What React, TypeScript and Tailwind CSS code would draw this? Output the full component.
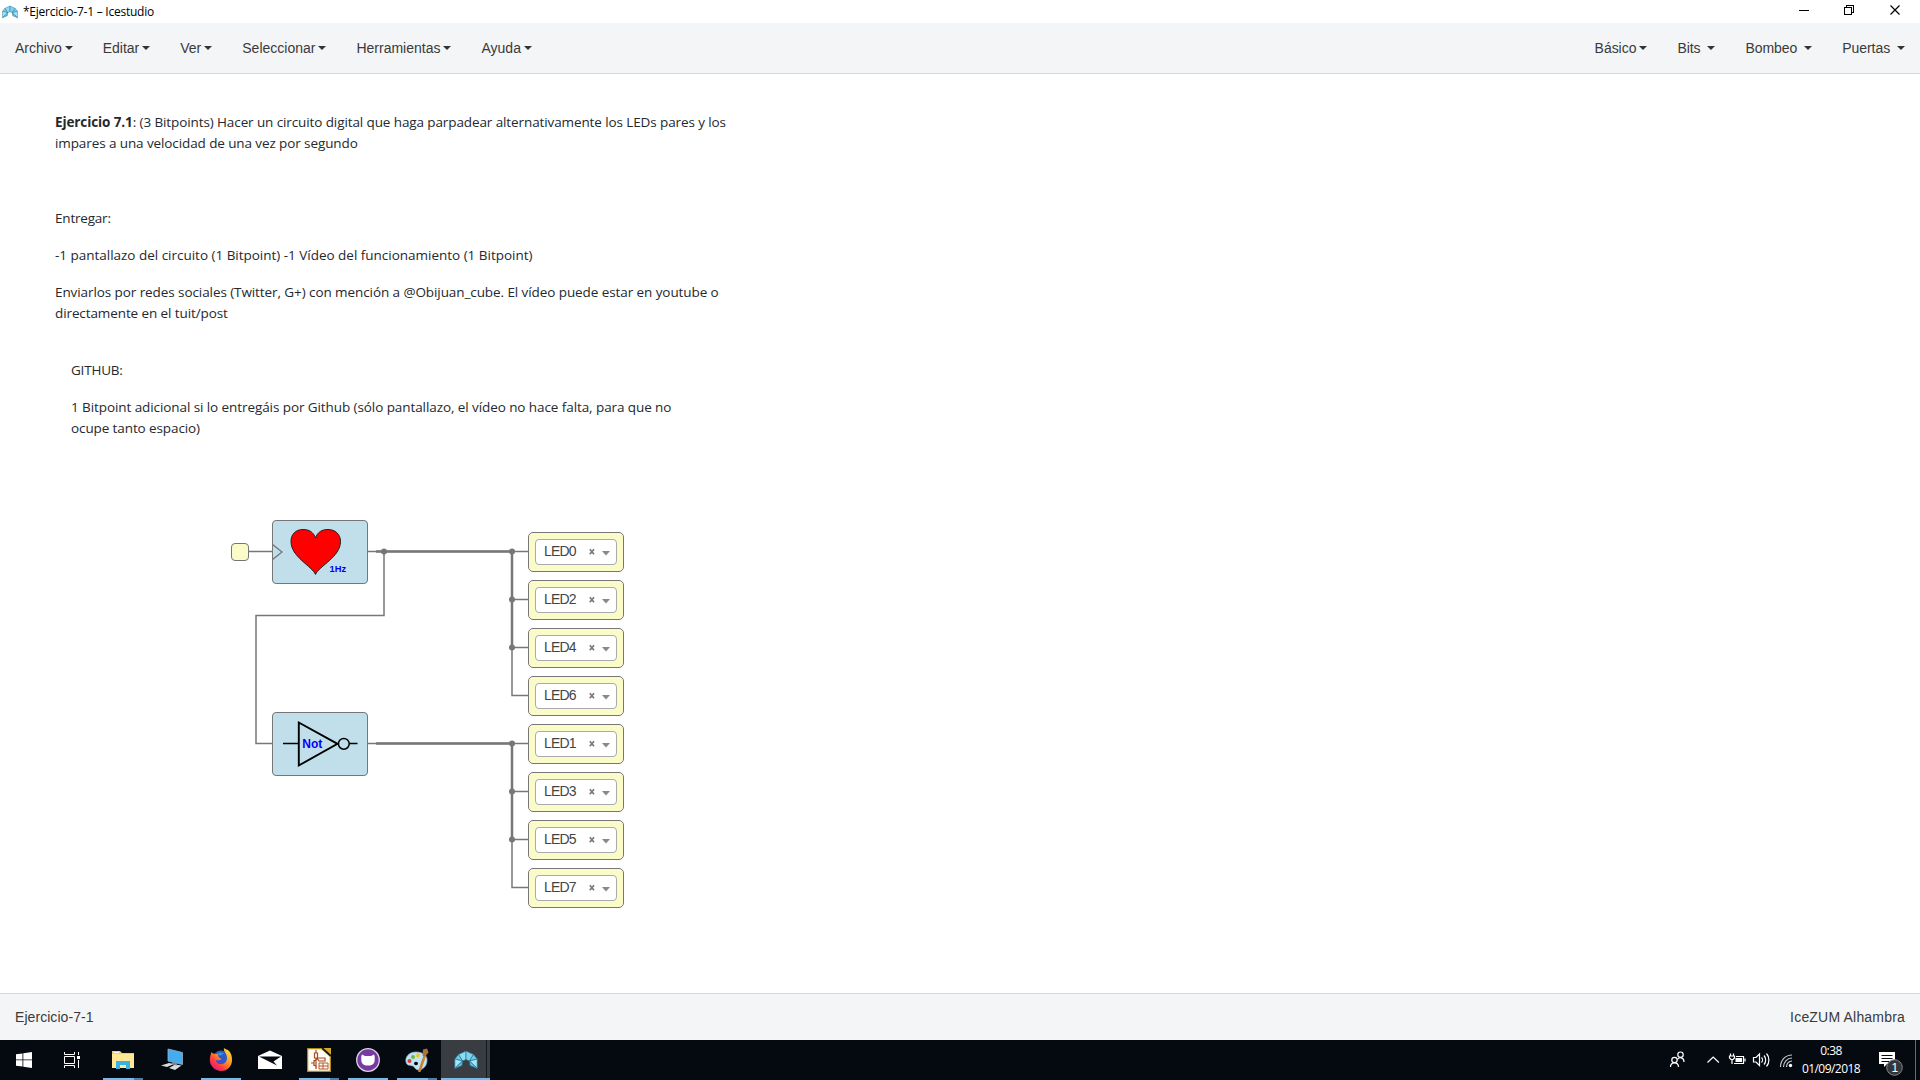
import React from "react";

const SANS = "font-['Liberation_Sans',Arial,sans-serif]";
const leftMenu = ["Archivo", "Editar", "Ver", "Seleccionar", "Herramientas", "Ayuda"];
const rightMenu = ["Básico", "Bits ", "Bombeo ", "Puertas "];

const Caret = () => (
  <span className="ml-[3px] inline-block border-x-4 border-t-4 border-x-transparent border-t-[#333] align-middle" />
);

function MenuItem({ label }: { label: string }) {
  return (
    <div className="flex h-[50px] items-center pr-[15px] pl-[15px] text-sm whitespace-pre text-[#3a3a3a]">
      <span>{label}</span>
      <Caret />
    </div>
  );
}

function IceLogo({ size }: { size: number }) {
  return (
    <svg width={size} height={size} viewBox="0 0 24 24" stroke="#2b7590" strokeWidth="0.7" strokeLinejoin="round">
      <path d="M12 3 4.500 6.500 8.500 13 12 11.500Z" fill="#8edcf4" />
      <path d="M12 3 19.500 6.500 15.500 13 12 11.500Z" fill="#7fd3ee" />
      <path d="M4.500 6.500 .8 11 8.500 13Z" fill="#6ecdec" />
      <path d="M19.500 6.500 23.200 11 15.500 13Z" fill="#6ecdec" />
      <path d="M.8 11 8.500 13 .8 20.500Z" fill="#a4e6f8" />
      <path d="M23.200 11 15.500 13 23.200 20.500Z" fill="#a4e6f8" />
      <path d="M.8 20.500 8.500 13 8 17.500Z" fill="#5fc3e6" />
      <path d="M23.200 20.500 15.500 13 16 17.500Z" fill="#5fc3e6" />
    </svg>
  );
}

function TitleBar() {
  return (
    <header className="flex h-[23px] shrink-0 items-center bg-white pl-[2px]">
      <IceLogo size={16} />
      <span className="ml-[5px] font-['Open_Sans','Noto_Sans',sans-serif] text-[12px] leading-4 tracking-[-0.24px] text-black">
        *Ejercicio-7-1 – Icestudio
      </span>
      <svg className="ml-auto" width="130" height="23" fill="none" stroke="#000" shapeRendering="crispEdges">
        <path d="M9 10.500H19" />
        <path d="M54.500 7.500h7v7h-7zM56.500 7V5.500h7v7H62" />
        <path d="M100.500 5.500l9 9M109.500 5.500l-9 9" shapeRendering="auto" strokeWidth="1.200" />
      </svg>
    </header>
  );
}

function Notes() {
  return (
    <div className="font-['Open_Sans','Noto_Sans',sans-serif] text-[13.500px] leading-[21px] whitespace-nowrap text-[#24292e]">
      <div className="absolute top-[38px] left-[55px]">
        <p className="tracking-[-0.105px]">
          <b>Ejercicio 7.1</b>: (3 Bitpoints) Hacer un circuito digital que haga parpadear alternativamente los LEDs pares y los
        </p>
        <p className="tracking-[-0.1px]">impares a una velocidad de una vez por segundo</p>
        <p className="mt-[54px] tracking-[-0.2px]">Entregar:</p>
        <p className="mt-4 tracking-[-0.017px]">-1 pantallazo del circuito (1 Bitpoint) -1 Vídeo del funcionamiento (1 Bitpoint)</p>
        <p className="mt-4 tracking-[-0.083px]">
          Enviarlos por redes sociales (Twitter, G+) con mención a @Obijuan_cube. El vídeo puede estar en youtube o
        </p>
        <p className="tracking-[-0.1px]">directamente en el tuit/post</p>
      </div>
      <div className="absolute top-[286px] left-[71px]">
        <p className="tracking-[-0.2px]">GITHUB:</p>
        <p className="mt-4 tracking-[-0.082px]">
          1 Bitpoint adicional si lo entregáis por Github (sólo pantallazo, el vídeo no hace falta, para que no
        </p>
        <p className="tracking-[-0.1px]">ocupe tanto espacio)</p>
      </div>
    </div>
  );
}

function Wires() {
  return (
    <svg className="absolute inset-0" width="700" height="919" viewBox="0 74 700 919" fill="none" stroke="#777">
      <g strokeWidth="1.500">
        <path d="M248 551.500H272M368 551.500H528" />
        <path d="M384 551.500V615.500H256V743.500H272M368 743.500H528" />
        <path d="M512 551.500V695.500H528M512 599.500H528M512 647.500H528" />
        <path d="M512 743.500V887.500H528M512 791.500H528M512 839.500H528" />
      </g>
      <g strokeWidth="2.500">
        <path d="M376 551.500H512V647.500M376 743.500H512V839.500" />
      </g>
      <g fill="#777" stroke="none">
        <circle cx="384" cy="551.500" r="3" />
        {[551.5, 599.5, 647.5, 743.5, 791.5, 839.5].map((y) => (
          <circle key={y} cx="512" cy={y} r="3" />
        ))}
      </g>
    </svg>
  );
}

function Led({ name, top }: { name: string; top: number }) {
  return (
    <div
      className="absolute left-[528px] flex h-10 w-24 items-center justify-center rounded-[5px] border border-[#777] bg-[#fbfbc9]"
      style={{ top }}
    >
      <div className="flex h-[26px] w-[82px] items-center rounded-[4px] border border-[#aaa] bg-white pl-2 text-[14px] text-[#444]">
        <span className="w-[44px] pb-[2px] tracking-[-0.8px]">{name}</span>
        <svg width="24" height="10" viewBox="0 0 24 10">
          <path d="M1.800 2.200l4.200 5M6 2.200l-4.200 5" stroke="#777" strokeWidth="1.700" />
          <path d="M14 4h8l-4 4.500z" fill="#888" />
        </svg>
      </div>
    </div>
  );
}

function Canvas() {
  return (
    <main className="relative flex-1 overflow-hidden bg-white">
      <Notes />
      <Wires />
      <div className="absolute top-[469px] left-[231px] size-[18px] rounded-[4px] border border-[#777] bg-[#fbfbc9]" />
      <div className="absolute top-[446px] left-[272px] h-16 w-24 rounded-[4px] border border-[#777] bg-[#c0dfeb]">
        <svg width="94" height="62" viewBox="273 521 94 62">
          <path d="M272.500 544.500L282 552L272.500 559.500" fill="none" stroke="#777" strokeWidth="1.300" />
          <path
            d="M315.500 574.500C312 566 291 557 291 541.500C291 534 296 529.500 303 529.500C309 529.500 313.500 532 315.500 538C317.500 532 322 529.500 328 529.500C335 529.500 340.500 534 340.500 541.500C340.500 557 319 566 315.500 574.500Z"
            fill="#f00"
            stroke="#222"
          />
          <text x="329.500" y="572" fill="#00f" fontSize="9.300" fontWeight="bold">1Hz</text>
        </svg>
      </div>
      <div className="absolute top-[638px] left-[272px] h-16 w-24 rounded-[4px] border border-[#777] bg-[#c0dfeb]">
        <svg width="94" height="62" viewBox="273 713 94 62" fill="none" stroke="#000">
          <path d="M283 743.500H298M349 743.500H357.500" strokeWidth="1.300" />
          <path d="M298.800 722.500V765.500L337.500 743.800Z" strokeWidth="1.900" />
          <circle cx="343.800" cy="743.800" r="5.400" strokeWidth="1.500" />
          <text x="302.300" y="748" fill="#00f" stroke="none" fontSize="12" fontWeight="bold">Not</text>
        </svg>
      </div>
      {["LED0", "LED2", "LED4", "LED6", "LED1", "LED3", "LED5", "LED7"].map((n, i) => (
        <Led key={n} name={n} top={458 + i * 48} />
      ))}
    </main>
  );
}

function TaskButton({ children, bar = "", extra = false, active = false }: {
  children: React.ReactNode;
  bar?: string;
  extra?: boolean;
  active?: boolean;
}) {
  return (
    <div className={`relative flex h-10 w-[49px] items-center justify-center ${active ? "bg-[#393d42]" : ""}`}>
      {children}
      {bar && (
        <div className={`absolute bottom-0 flex h-[2px] bg-[#76b9ed] ${bar}`}>
          {extra && <span className="ml-auto w-[9px] bg-[#4f7fa6]" />}
        </div>
      )}
    </div>
  );
}

function TaskBar() {
  return (
    <footer className="flex h-10 shrink-0 bg-[#050a10] text-white">
      <div className="flex w-12 items-center justify-center">
        <svg width="16" height="16" viewBox="0 0 16 16" fill="#fff">
          <path d="M0 2.300 6.500 1.400V7.500H0zM7.300 1.300 16 0V7.500H7.300zM0 8.300H6.500V14.600L0 13.700zM7.300 8.300H16V16L7.300 14.700z" />
        </svg>
      </div>
      <div className="flex w-[50px] items-center justify-center pr-[2px]">
        <svg width="16" height="16" viewBox="0 0 16 16" fill="none" stroke="#fff">
          <path d="M.5 4.500h10v7H.5zM.5 0v2.500h10V0M.5 16v-2.500h10V16M14.500 0v3M14.500 8v8" />
          <path d="M13 4h3v3h-3z" fill="#fff" stroke="none" />
        </svg>
      </div>
      <TaskButton bar="w-10" extra>
        <svg width="22" height="20" viewBox="0 0 22 20">
          <path d="M0 1h8l2 2h12v15H0z" fill="#f6ce62" />
          <path d="M0 4h22v14H0z" fill="#ffe794" />
          <path d="M2 2h5v1H2z" fill="#fff" />
          <path d="M4 19v-8h14v8h-4v-4H8v4z" fill="#38b1e7" />
        </svg>
      </TaskButton>
      <TaskButton>
        <svg width="24" height="24" viewBox="0 0 24 24">
          <path d="M8 1 22.500 4.500V16.500L8 13z" fill="#43adf2" stroke="#9bb0bd" strokeWidth=".8" />
          <path d="M1 17.500 9 15l5 1-7 3zM9 20l6-3.500 6.500 1L15 22z" fill="#d8dcdf" />
          <path d="M12 14l5 1.500v2l-5-1z" fill="#7b8992" />
        </svg>
      </TaskButton>
      <TaskButton bar="w-10">
        <svg width="24" height="24" viewBox="0 0 24 24">
          <defs>
            <linearGradient id="fox" x1="1" y1="0" x2="0.200" y2="1">
              <stop offset="0" stopColor="#fff04a" />
              <stop offset=".45" stopColor="#ff9a1c" />
              <stop offset=".75" stopColor="#ff3a45" />
              <stop offset="1" stopColor="#e31587" />
            </linearGradient>
          </defs>
          <circle cx="12" cy="11" r="8.500" fill="#3156c9" />
          <path d="M2.500 4C1 8 .5 11 1 14c1 5 6 9 11 9 7 0 11-5 11-11 0-4-1-7-3-9C18 1 15 1 15 0c-1 3 3 5 3 10 0 4-3 6-6 6-4 0-5-2-5-4 2 1 4 0 6-1-3-1-4-2-4-5-3 0-5 0-6.500-2z" fill="url(#fox)" />
          <path d="M8 6c2-2 5-2 7 0-2 0-3 1-3 2" fill="#229ed9" />
        </svg>
      </TaskButton>
      <TaskButton>
        <svg width="24" height="20" viewBox="0 0 24 20">
          <path d="M0 6 12 .5 24 6V19H0z" fill="#fff" />
          <path d="M1 6.500H23L15.500 11.500 19 15.500z" fill="#050a10" />
        </svg>
      </TaskButton>
      <TaskButton bar="w-10" extra>
        <svg width="24" height="24" viewBox="0 0 24 24" fill="none">
          <path d="M.5.500h16l7 7v16H.5z" fill="#fffdf5" stroke="#b18714" strokeWidth="1.500" />
          <path d="M13 0h11v10z" fill="#d4aa27" />
          <path d="M15 0 24 8" stroke="#171a1c" strokeWidth="1.800" />
          <path d="M9 2v3M7.500 5h3v5h-3zM9 10v11M4 15h3M7 12v6M7 13l3-2M7 17l3 2M10 10h8v3h-6z" stroke="#a94b25" strokeWidth="1.200" />
          <path d="M12 15h9v6h-9zM12 18h9M16 15v6" stroke="#b35b34" />
        </svg>
      </TaskButton>
      <TaskButton bar="w-10">
        <svg width="24" height="24" viewBox="0 0 24 24">
          <circle cx="12" cy="12" r="11.300" fill="#773aa0" stroke="#ded5e5" strokeWidth="1.300" />
          <path d="M6 6.500l3 1.500h6l3-1.500c1 2 .7 3 .7 5 0 4-2 6-6.700 6s-6.700-2-6.700-6c0-2-.3-3 .7-5z" fill="#fff" />
        </svg>
      </TaskButton>
      <TaskButton bar="w-10" extra>
        <svg width="24" height="24" viewBox="0 0 24 24">
          <path d="M11 4C4 4 0 9 1 14c1 4 4 3 7 4 2 1 2 4 6 4 6-1 8-6 8-10 0-5-5-8-11-8z" fill="#bfe3f2" stroke="#8fbdd1" strokeWidth=".7" />
          <ellipse cx="11" cy="15.500" rx="2" ry="1.700" fill="#050a10" />
          <circle cx="4.500" cy="13" r="2" fill="#db3a3a" />
          <circle cx="8" cy="9" r="2" fill="#74b63e" />
          <circle cx="13" cy="7.500" r="2" fill="#efc22f" />
          <path d="M20 7 14.500 23" stroke="#c9822f" strokeWidth="2.500" strokeLinecap="round" />
          <path d="M18 1.500l4-1 1.500 4-3.500 4-2.500-1z" fill="#a8713e" />
        </svg>
      </TaskButton>
      <TaskButton bar="inset-x-0" active>
        <IceLogo size={24} />
        <span className="absolute top-0 right-[3px] h-[38px] w-px bg-[#16191d]" />
      </TaskButton>

      <div className="ml-auto flex items-center">
        <svg width="130" height="40" viewBox="1665 1040 130 40" fill="none" stroke="#fff" strokeWidth="1.200">
          <circle cx="1674.500" cy="1060" r="2.700" />
          <path d="M1670.500 1067c0-3 1.500-4.200 4-4.200s4 1.200 4 4.200" />
          <circle cx="1680.500" cy="1054.700" r="2.700" />
          <path d="M1677.500 1059.500c2-3 6.500-2 6.500 2.500" />
          <path d="M1707.500 1062.500l5.700-5.500 5.700 5.500" />
          <path d="M1736 1056.500h7.500v7h-9.500M1745 1058.500v3" />
          <path d="M1735.500 1058h6.500v4h-6.500z" fill="#fff" stroke="none" />
          <path d="M1729.500 1056h5v2l-1.500 1.500h-2l-1.500-1.500zM1730.500 1053.500v2M1733.500 1053.500v2M1732 1060v4" />
          <path d="M1753.500 1057.500h2.500l3.500-3.500v11.500l-3.500-3.500h-2.500z" />
          <path d="M1761.500 1057.500c1.300 1.300 1.300 3.700 0 5M1764 1055.500c2.200 2.500 2.200 6.500 0 9M1766.500 1053.500c3.200 3.500 3.200 9.500 0 13" />
          <path d="M1780.500 1067c0-7 5-12 11.500-12M1783.500 1067c0-5 4-9 8.500-9M1786.500 1067c0-3.500 2.500-6 5.500-6" stroke="#c8cacc" />
          <circle cx="1790.500" cy="1065.500" r="1.700" fill="#fff" stroke="none" />
        </svg>
        <div className="ml-[1px] w-[70px] text-center font-['Open_Sans','Noto_Sans',sans-serif] text-[12px] leading-[18px] tracking-[-0.55px]">
          <div>0:38</div>
          <div>01/09/2018</div>
        </div>
        <svg className="ml-3" width="42" height="40" viewBox="1878 1040 42 40">
          <path d="M1879 1052h16v12h-8l-3 3v-3h-5z" fill="#fff" />
          <path d="M1881.500 1055.500h11M1881.500 1058.500h11M1881.500 1061.500h8" stroke="#050a10" />
          <circle cx="1894.500" cy="1067.500" r="7.800" fill="#33373b" stroke="#85888b" />
          <text x="1891.400" y="1072" fill="#fff" fontSize="12">1</text>
          <path d="M1915.500 1040v40" stroke="#666a6f" />
        </svg>
      </div>
    </footer>
  );
}

export default function App() {
  return (
    <div className={`flex h-[1080px] w-[1920px] flex-col overflow-hidden bg-white ${SANS}`}>
      <TitleBar />
      <nav className="flex h-[51px] shrink-0 justify-between border-b border-[#d5d8db] bg-[#f4f5f7]">
        <div className="flex">{leftMenu.map((m) => <MenuItem key={m} label={m} />)}</div>
        <div className="flex tracking-[-0.04px]">{rightMenu.map((m) => <MenuItem key={m} label={m} />)}</div>
      </nav>
      <Canvas />
      <div className="flex h-[47px] shrink-0 items-center justify-between border-t border-[#d5d8db] bg-[#f4f5f7] px-[15px] text-sm text-[#3a3a3a]">
        <span className="tracking-[0.06px]">Ejercicio-7-1</span>
        <span className="tracking-[0.19px]">IceZUM Alhambra</span>
      </div>
      <TaskBar />
    </div>
  );
}
